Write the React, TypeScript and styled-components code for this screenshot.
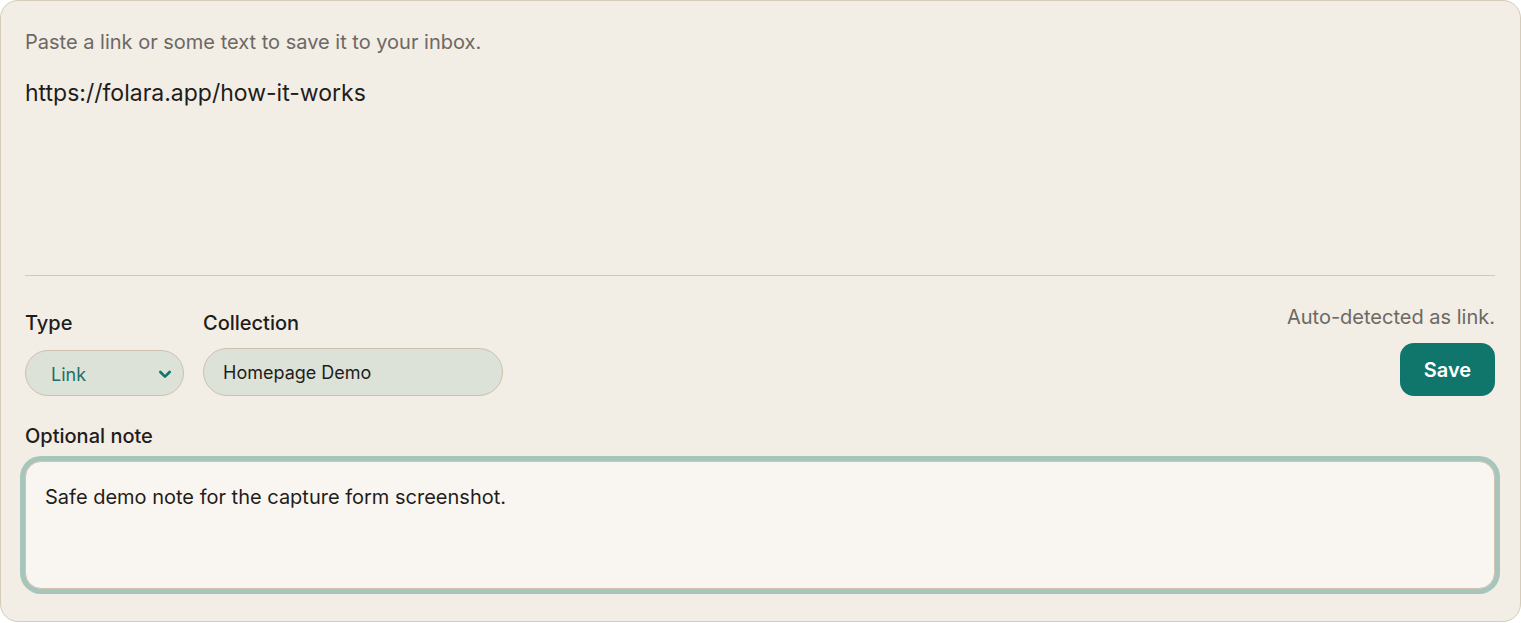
import React from 'react';
import styled, { createGlobalStyle } from 'styled-components';

const GlobalStyle = createGlobalStyle`
    html, body {
        margin: 0;
        padding: 0;
        background: #ffffff;
    }
    body {
        font-family: Inter, "Noto Sans", "Liberation Sans", sans-serif;
        color: #1f1d1b;
    }
`;

const Card = styled.form`
    box-sizing: border-box;
    width: 1521px;
    height: 622px;
    background: #f2ede5;
    border: 1px solid #d6cbb9;
    border-radius: 18px;
    padding: 28px 25px 0 24px;
    display: flex;
    flex-direction: column;
`;

const Hint = styled.div`
    font-size: 20px;
    line-height: 26px;
    color: #6c6864;
`;

const MainInput = styled.textarea`
    box-sizing: border-box;
    margin-top: 23px;
    height: 180px;
    border: none;
    background: transparent;
    resize: none;
    padding: 0;
    font-family: inherit;
    font-size: 23px;
    line-height: 30px;
    color: #1f1d1b;
    outline: none;
`;

const Divider = styled.hr`
    margin: 17px 0 0 0;
    border: none;
    border-top: 1px solid #d3c8b6;
`;

const ControlsRow = styled.div`
    display: flex;
    align-items: flex-end;
    justify-content: space-between;
    margin-top: 29px;
`;

const FieldGroup = styled.div`
    display: flex;
    gap: 19px;
    align-items: flex-end;
`;

const Field = styled.div`
    display: flex;
    flex-direction: column;
`;

const Label = styled.label<{ $gap?: number }>`
    font-size: 20px;
    line-height: 24px;
    font-weight: 500;
    color: #1f1d1b;
    margin-bottom: ${p => p.$gap ?? 14}px;
`;

const SelectBox = styled.div`
    box-sizing: border-box;
    width: 159px;
    height: 46px;
    border-radius: 23px;
    background: #dce2d8;
    border: 1px solid #cdc1ad;
    display: flex;
    align-items: center;
    justify-content: space-between;
    padding: 2px 10px 0 25px;
    font-size: 18px;
    color: #1d6f66;
`;

const TextInput = styled.input`
    box-sizing: border-box;
    width: 300px;
    height: 48px;
    border-radius: 24px;
    background: #dce2d8;
    border: 1px solid #cdc1ad;
    padding: 0 19px;
    font-family: inherit;
    font-size: 18px;
    color: #1f1d1b;
    outline: none;
`;

const Side = styled.div`
    display: flex;
    flex-direction: column;
    align-items: flex-end;
    gap: 14px;
`;

const Status = styled.div`
    font-size: 20px;
    line-height: 24px;
    color: #6c6864;
`;

const SaveButton = styled.button`
    box-sizing: border-box;
    width: 95px;
    height: 53px;
    border: none;
    border-radius: 14px;
    background: #10766b;
    color: #ffffff;
    font-family: inherit;
    font-size: 20px;
    font-weight: 600;
    cursor: pointer;
`;

const NoteSection = styled.div`
    display: flex;
    flex-direction: column;
    margin-top: 28px;
`;

const NoteInput = styled.textarea`
    box-sizing: border-box;
    width: 100%;
    height: 128px;
    background: #f9f5f0;
    border: 1px solid #d3c4b0;
    border-radius: 16px;
    box-shadow: 0 0 0 5px #a6c5bb;
    padding: 22px 19px;
    resize: none;
    font-family: inherit;
    font-size: 20px;
    line-height: 26px;
    color: #1f1d1b;
    outline: none;
`;

const Chevron = () => (
    <svg width="16" height="16" viewBox="0 0 24 24" fill="none" stroke="#13756a" strokeWidth="4" strokeLinecap="round" strokeLinejoin="round">
        <path d="M5 9l7 7 7-7" />
    </svg>
);

export default function App() {
    return (
        <>
            <GlobalStyle />
            <Card onSubmit={e => e.preventDefault()}>
                <Hint>Paste a link or some text to save it to your inbox.</Hint>
                <MainInput defaultValue="https://folara.app/how-it-works" aria-label="Link or text" />
                <Divider />
                <ControlsRow>
                    <FieldGroup>
                        <Field>
                            <Label $gap={15}>Type</Label>
                            <SelectBox role="combobox" aria-label="Type">
                                <span>Link</span>
                                <Chevron />
                            </SelectBox>
                        </Field>
                        <Field>
                            <Label $gap={13}>Collection</Label>
                            <TextInput defaultValue="Homepage Demo" aria-label="Collection" />
                        </Field>
                    </FieldGroup>
                    <Side>
                        <Status>Auto-detected as link.</Status>
                        <SaveButton type="submit">Save</SaveButton>
                    </Side>
                </ControlsRow>
                <NoteSection>
                    <Label $gap={13}>Optional note</Label>
                    <NoteInput defaultValue="Safe demo note for the capture form screenshot." aria-label="Optional note" />
                </NoteSection>
            </Card>
        </>
    );
}
